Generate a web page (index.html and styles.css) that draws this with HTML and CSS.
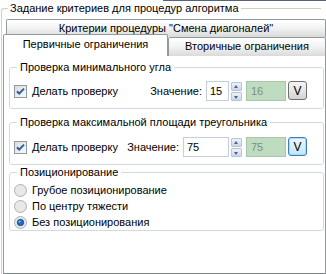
FILE: index.html
```html
<!DOCTYPE html>
<html lang="ru">
  <head>
    <meta charset="UTF-8" />
    <meta name="viewport" content="width=device-width, initial-scale=1.0" />
    <title>Задание критериев для процедур алгоритма</title>
    <link rel="stylesheet" href="styles.css">
  </head>
  <body>
    <div class="edge"></div>
    <fieldset class="outer">
      <legend>Задание критериев для процедур алгоритма</legend>
      <div class="tabs">
        <!-- верхний ряд вкладок -->
        <div class="tab-row first">
          <div class="tab wide">Критерии процедуры "Смена диагоналей"</div>
        </div>
        <!-- нижний ряд вкладок -->
        <div class="tab-row second">
          <div class="tab active">Первичные ограничения</div>
          <div class="tab back">Вторичные ограничения</div>
        </div>

        <div class="page">
          <fieldset class="group g1">
            <legend>Проверка минимального угла</legend>
            <div class="row">
              <label class="check">
                <svg width="13" height="13" viewBox="0 0 13 13">
                  <defs>
                    <linearGradient id="cb1" x1="0" y1="0" x2="1" y2="1">
                      <stop offset="0" stop-color="#dcdcd6" />
                      <stop offset="1" stop-color="#fafafa" />
                    </linearGradient>
                  </defs>
                  <rect x="0.5" y="0.5" width="12" height="12" fill="url(#cb1)" stroke="#8f9aa6" />
                  <path d="M3 6.2 L5.2 8.6 L10 3.6" fill="none" stroke="#2a5db0" stroke-width="2" />
                </svg>
                Делать проверку
              </label>
              <span class="value-label">Значение:</span>
              <span class="num short">15</span>
              <div class="spin">
                <span class="up"></span>
                <span class="down"></span>
              </div>
              <span class="result">16</span>
              <button class="v">V</button>
            </div>
          </fieldset>

          <fieldset class="group g2">
            <legend>Проверка максимальной площади треугольника</legend>
            <div class="row">
              <label class="check">
                <svg width="13" height="13" viewBox="0 0 13 13">
                  <defs>
                    <linearGradient id="cb2" x1="0" y1="0" x2="1" y2="1">
                      <stop offset="0" stop-color="#dcdcd6" />
                      <stop offset="1" stop-color="#fafafa" />
                    </linearGradient>
                  </defs>
                  <rect x="0.5" y="0.5" width="12" height="12" fill="url(#cb2)" stroke="#8f9aa6" />
                  <path d="M3 6.2 L5.2 8.6 L10 3.6" fill="none" stroke="#2a5db0" stroke-width="2" />
                </svg>
                Делать проверку
              </label>
              <span class="value-label">Значение:</span>
              <span class="num long">75</span>
              <div class="spin">
                <span class="up"></span>
                <span class="down"></span>
              </div>
              <span class="result">75</span>
              <button class="v focus">V</button>
            </div>
          </fieldset>

          <fieldset class="group g3">
            <legend>Позиционирование</legend>
            <label class="radio">
              <svg width="13" height="13" viewBox="0 0 13 13">
                <circle cx="6.5" cy="6.5" r="6" fill="#e8e8e4" stroke="#a9b1b8" />
              </svg>
              Грубое позиционирование
            </label>
            <label class="radio">
              <svg width="13" height="13" viewBox="0 0 13 13">
                <circle cx="6.5" cy="6.5" r="6" fill="#e8e8e4" stroke="#a9b1b8" />
              </svg>
              По центру тяжести
            </label>
            <label class="radio">
              <svg width="13" height="13" viewBox="0 0 13 13">
                <circle cx="6.5" cy="6.5" r="6" fill="#e8e8e4" stroke="#a9b1b8" />
                <circle cx="6.5" cy="6.5" r="3.2" fill="#1f6fc4" stroke="#12468a" stroke-width="0.8" />
                <circle cx="5.6" cy="5.6" r="1" fill="#8cc4f4" />
              </svg>
              Без позиционирования
            </label>
          </fieldset>
        </div>
      </div>
    </fieldset>
  </body>
</html>
```

FILE: styles.css
```css
/* общие настройки */
* {
  box-sizing: border-box;
}
body {
  margin: 0;
  width: 326px;
  height: 274px;
  overflow: hidden;
  background-color: #fff;
  color: #000;
  font-family: "Liberation Sans", Arial, sans-serif;
  font-size: 11px;
}
.edge {
  height: 1px;
  margin-left: 163px;
  margin-bottom: 1px;
  background-color: #56657a;
}
fieldset {
  margin: 0;
  min-width: 0;
}
legend {
  line-height: 13px;
}

/* внешняя рамка */
.outer {
  width: 320px;
  margin-left: 1px;
  padding: 0 0 0 1px;
  border: 1px solid #d0d0c8;
  border-right: none;
  border-bottom: none;
  border-radius: 3px 0 0 0;
}
.outer > legend {
  margin-left: 5px;
  padding: 0 2px;
}
.tabs {
  margin-top: 4px;
  margin-right: -5px;
}

/* вкладки */
.tab-row {
  display: flex;
}
.tab-row.first {
  padding-left: 3px;
}
.tab-row.second {
  margin-top: -3px;
}
.tab {
  border: 1px solid #919b9c;
  border-bottom: none;
  border-radius: 2px 2px 0 0;
  text-align: center;
  background: linear-gradient(#ffffff, #f4f4f4 45%, #dadada);
}
.tab.wide {
  flex: 1;
  height: 18px;
  line-height: 16px;
}
.tab.active {
  position: relative;
  z-index: 1;
  width: 165px;
  height: 22px;
  padding-top: 3px;
  line-height: 13px;
  background: #fff;
}
.tab.back {
  flex: 1;
  height: 19px;
  margin-top: 3px;
  padding-top: 2px;
  line-height: 13px;
}

/* страница вкладки */
.page {
  height: 219px;
  margin-top: -1px;
  padding: 0 1px 0 5px;
  border: 1px solid #919b9c;
  border-bottom-color: #7d8687;
  background-color: #fff;
}

/* группы */
.group {
  border: 1px solid #d3dbe2;
  border-radius: 3px;
  padding: 7px 4px 7px 4px;
}
.group > legend {
  margin-left: 3px;
  padding: 0 3px;
}
.g1 {
  margin-top: 5px;
}
.g2 {
  margin-top: 7px;
  padding-top: 8px;
  padding-bottom: 7px;
}
.g3 {
  margin-top: 1px;
  padding-top: 3px;
  padding-bottom: 0;
}

/* строка с проверкой */
.row {
  display: flex;
  align-items: center;
  height: 20px;
  margin-right: 12px;
}
.check,
.radio {
  display: flex;
  align-items: center;
  gap: 5px;
}
.radio {
  height: 16px;
}
.value-label {
  margin-left: auto;
  margin-right: 4px;
}
.num {
  height: 20px;
  padding-left: 3px;
  line-height: 18px;
  border: 1px solid #c3d0dc;
  background-color: #fff;
}
.num.short {
  width: 23px;
}
.num.long {
  width: 46px;
}

/* счётчик */
.spin {
  display: flex;
  flex-direction: column;
  gap: 1px;
  width: 11px;
  height: 19px;
  margin-left: 2px;
}
.spin span {
  flex: 1;
  position: relative;
  border: 1px solid #b7c5d6;
  border-radius: 1px;
  background: linear-gradient(#eef3fa, #c9d6e8);
}
.spin span::after {
  content: '';
  position: absolute;
  left: 2px;
  border-left: 2.5px solid transparent;
  border-right: 2.5px solid transparent;
}
.spin .up::after {
  top: 2px;
  border-bottom: 3px solid #4d6185;
}
.spin .down::after {
  top: 3px;
  border-top: 3px solid #4d6185;
}

/* вычисленное значение */
.result {
  width: 40px;
  height: 20px;
  margin-left: 4px;
  padding-left: 4px;
  line-height: 18px;
  color: #7e8e7e;
  border: 1px solid #a9c6a9;
  background-color: #c0dcc0;
}
.v {
  width: 19px;
  height: 19px;
  margin-left: 2px;
  margin-top: -1px;
  padding: 0;
  font-family: inherit;
  font-size: 12px;
  color: #000;
  border: 1px solid #707070;
  border-radius: 3px;
  background: linear-gradient(#f4f4f4, #e6e6e6 50%, #d2d2d2);
}
.v.focus {
  border-color: #3c7fb1;
  background: linear-gradient(#eaf6fd, #d9f0fc 50%, #bee6fd);
  box-shadow: inset 0 0 0 1px #a6dcf7;
}
```
